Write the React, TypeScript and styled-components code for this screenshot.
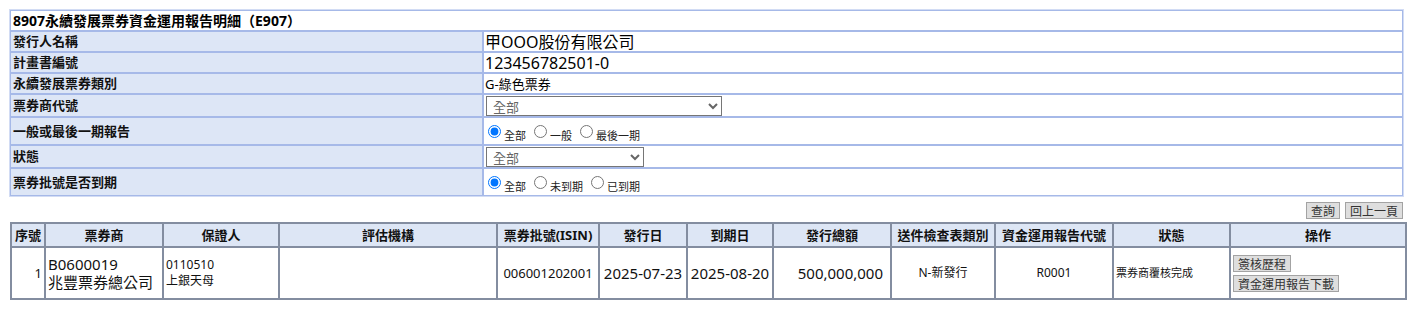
import React from 'react';
import styled, { createGlobalStyle } from 'styled-components';

const Global = createGlobalStyle`
  html, body { margin: 0; padding: 0; background: #fff; }
  body {
    font-family: "Noto Sans", "Noto Sans CJK TC", sans-serif;
    color: #111;
  }
`;

const Page = styled.div`
  padding: 9px 0 8px 9px;
  width: 1396px;
`;

const InfoTable = styled.table`
  width: 1395px;
  border-collapse: separate;
  border-spacing: 0;
  border: 1px solid #d2dcf4;
  table-layout: fixed;
`;

const TitleCell = styled.td`
  background: #fff;
  border: 1px solid #a6b9e8;
  height: 19px;
  padding: 0 2px;
  font-size: 14px;
  font-weight: bold;
  line-height: 19px;
  color: #000;
`;

const LabelCell = styled.td<{ $h: number }>`
  background: #dde6f6;
  border: 1px solid #a6b9e8;
  height: ${(p) => p.$h}px;
  padding: 0 0 0 2px;
  font-size: 13px;
  font-weight: bold;
  line-height: 17px;
  color: #111;
  vertical-align: middle;
`;

const ValueCell = styled.td<{ $size?: number }>`
  background: #fff;
  border: 1px solid #a6b9e8;
  padding: 0 0 0 1px;
  font-size: ${(p) => p.$size ?? 13}px;
  line-height: 18px;
  color: #000;
  vertical-align: middle;
`;

const Select = styled.select<{ $w: number }>`
  width: ${(p) => p.$w}px;
  height: 20px;
  margin: 0 0 0 1px;
  font-family: inherit;
  font-size: 13px;
  color: #666;
  background: #fff;
  border: 1px solid #767676;
  border-radius: 0;
  padding: 0 0 0 2px;
  display: block;
`;

const RadioGroup = styled.div`
  display: flex;
  align-items: center;
  height: 26px;
`;

const RadioItem = styled.label`
  display: flex;
  align-items: center;
  margin-right: 5px;
`;

const Radio = styled.input`
  width: 13px;
  height: 13px;
  margin: 0 3px 0 3px;
`;

const RadioText = styled.span`
  font-size: 11px;
  line-height: 13px;
  padding-top: 9px;
  color: #222;
`;

const ButtonBar = styled.div`
  display: flex;
  justify-content: flex-end;
  gap: 5px;
  margin: 5px 2px 3px 0;
`;

const Btn = styled.button`
  font-family: "Noto Sans CJK TC", sans-serif;
  font-size: 12px;
  height: 17px;
  line-height: 15px;
  padding: 0 4px;
  background: #dedede;
  border: 1px solid #a3a3a3;
  border-radius: 0;
  color: #333;
  display: block;
`;

const ActionBtn = styled(Btn)`
  margin: 0 0 3px 0;
  &:last-child { margin-bottom: 0; }
`;

const ListTable = styled.table`
  margin-left: 1px;
  width: 1395px;
  border-collapse: collapse;
  table-layout: fixed;
  border: 2px solid #838da0;
`;

const Th = styled.th`
  background: #dde6f5;
  border: 2px solid #838da0;
  height: 22px;
  padding: 0;
  font-size: 13px;
  font-weight: bold;
  line-height: 16px;
  text-align: center;
  color: #111;
  white-space: nowrap;
`;

const Td = styled.td<{ $align?: string; $size?: number; $lh?: number; $pr?: number }>`
  border: 2px solid #838da0;
  height: 50px;
  padding: 0 ${(p) => p.$pr ?? 2}px 0 2px;
  font-size: ${(p) => p.$size ?? 13}px;
  line-height: ${(p) => p.$lh ?? 18}px;
  text-align: ${(p) => p.$align ?? 'left'};
  vertical-align: middle;
  color: #111;
  white-space: nowrap;
`;

const cols = [34, 118, 116, 218, 102, 88, 86, 118, 104, 118, 117, 176];
const headers = ['序號', '票券商', '保證人', '評估機構', '票券批號(ISIN)', '發行日', '到期日', '發行總額', '送件檢查表類別', '資金運用報告代號', '狀態', '操作'];

export default function App() {
  return (
    <>
      <Global />
      <Page>
        <InfoTable>
          <colgroup>
            <col style={{ width: 473 }} />
            <col />
          </colgroup>
          <tbody>
            <tr>
              <TitleCell colSpan={2}>8907永續發展票券資金運用報告明細（E907）</TitleCell>
            </tr>
            <tr>
              <LabelCell $h={19}>發行人名稱</LabelCell>
              <ValueCell $size={16}>甲OOO股份有限公司</ValueCell>
            </tr>
            <tr>
              <LabelCell $h={19}>計畫書編號</LabelCell>
              <ValueCell $size={16}>123456782501-0</ValueCell>
            </tr>
            <tr>
              <LabelCell $h={19}>永續發展票券類別</LabelCell>
              <ValueCell $size={13}>G-綠色票券</ValueCell>
            </tr>
            <tr>
              <LabelCell $h={21}>票券商代號</LabelCell>
              <ValueCell>
                <Select $w={236} defaultValue="all">
                  <option value="all">全部</option>
                </Select>
              </ValueCell>
            </tr>
            <tr>
              <LabelCell $h={26}>一般或最後一期報告</LabelCell>
              <ValueCell>
                <RadioGroup>
                  <RadioItem><Radio type="radio" name="rpt" defaultChecked /><RadioText>全部</RadioText></RadioItem>
                  <RadioItem><Radio type="radio" name="rpt" /><RadioText>一般</RadioText></RadioItem>
                  <RadioItem><Radio type="radio" name="rpt" /><RadioText>最後一期</RadioText></RadioItem>
                </RadioGroup>
              </ValueCell>
            </tr>
            <tr>
              <LabelCell $h={21}>狀態</LabelCell>
              <ValueCell>
                <Select $w={158} defaultValue="all">
                  <option value="all">全部</option>
                </Select>
              </ValueCell>
            </tr>
            <tr>
              <LabelCell $h={26}>票券批號是否到期</LabelCell>
              <ValueCell>
                <RadioGroup>
                  <RadioItem><Radio type="radio" name="exp" defaultChecked /><RadioText>全部</RadioText></RadioItem>
                  <RadioItem><Radio type="radio" name="exp" /><RadioText>未到期</RadioText></RadioItem>
                  <RadioItem><Radio type="radio" name="exp" /><RadioText>已到期</RadioText></RadioItem>
                </RadioGroup>
              </ValueCell>
            </tr>
          </tbody>
        </InfoTable>

        <ButtonBar>
          <Btn>查詢</Btn>
          <Btn>回上一頁</Btn>
        </ButtonBar>

        <ListTable>
          <colgroup>
            {cols.map((w, i) => (
              <col key={i} style={{ width: w }} />
            ))}
          </colgroup>
          <thead>
            <tr>
              {headers.map((h) => (
                <Th key={h}>{h}</Th>
              ))}
            </tr>
          </thead>
          <tbody>
            <tr>
              <Td $align="right">1</Td>
              <Td $size={15}>B0600019<br />兆豐票券總公司</Td>
              <Td $size={12} $lh={16}>0110510<br />上銀天母</Td>
              <Td />
              <Td $align="center">006001202001</Td>
              <Td $align="center" $size={15}>2025-07-23</Td>
              <Td $align="center" $size={15}>2025-08-20</Td>
              <Td $align="right" $size={15} $pr={7}>500,000,000</Td>
              <Td $align="center" $size={12}>N-新發行</Td>
              <Td $align="center" $size={12}>R0001</Td>
              <Td $size={11}>票券商覆核完成</Td>
              <Td>
                <ActionBtn>簽核歷程</ActionBtn>
                <ActionBtn>資金運用報告下載</ActionBtn>
              </Td>
            </tr>
          </tbody>
        </ListTable>
      </Page>
    </>
  );
}
